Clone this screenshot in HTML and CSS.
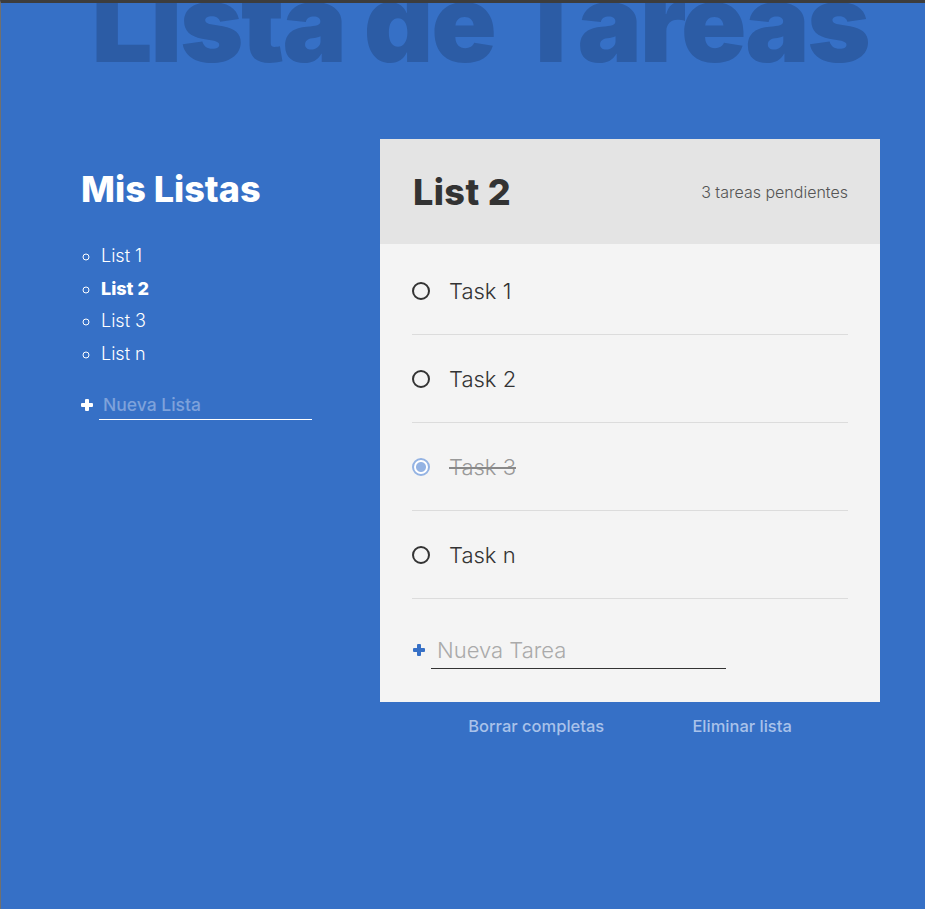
FILE: index.html
```html
<!DOCTYPE html>
<html lang="es">
<head>
<meta charset="utf-8">
<title>Lista de Tareas</title>
<link rel="stylesheet" href="styles.css">
</head>
<body>
<div class="page">
  <h1 class="title">Lista de Tareas</h1>
  <main class="layout">
    <section class="lists">
      <h2 class="lists-title">Mis Listas</h2>
      <ul class="list-names">
        <li>List 1</li>
        <li class="active">List 2</li>
        <li>List 3</li>
        <li>List n</li>
      </ul>
      <form class="new-list">
        <span class="plus plus-white"></span>
        <input class="new-list-input" type="text" placeholder="Nueva Lista">
      </form>
    </section>
    <section class="board">
      <div class="card">
        <header class="card-header">
          <h2 class="card-title">List 2</h2>
          <p class="card-count">3 tareas pendientes</p>
        </header>
        <div class="card-body">
          <ul class="tasks">
            <li class="task"><span class="check"></span><span class="task-label">Task 1</span></li>
            <li class="task"><span class="check"></span><span class="task-label">Task 2</span></li>
            <li class="task done"><span class="check"></span><span class="task-label">Task 3</span></li>
            <li class="task"><span class="check"></span><span class="task-label">Task n</span></li>
          </ul>
          <form class="new-task">
            <span class="plus plus-blue"></span>
            <input class="new-task-input" type="text" placeholder="Nueva Tarea">
          </form>
        </div>
      </div>
      <div class="actions">
        <button class="action" type="button">Borrar completas</button>
        <button class="action" type="button">Eliminar lista</button>
      </div>
    </section>
  </main>
</div>
</body>
</html>
```

FILE: styles.css
```css
* { box-sizing: border-box; }

html, body {
  margin: 0;
  padding: 0;
  height: 100%;
}

body {
  font-family: Inter, "Noto Sans", sans-serif;
  background: #3670c6;
}

.page {
  height: 909px;
  background: #3670c6;
  border-top: 3px solid #3d3d3d;
  border-left: 1px solid #707070;
  overflow: hidden;
}

.title {
  margin: -34px 0 0 0;
  padding-left: 34px;
  font-family: Inter, sans-serif;
  font-weight: 900;
  font-size: 108px;
  line-height: 108px;
  letter-spacing: -2.3px;
  color: #2c5ca5;
  text-align: center;
  white-space: nowrap;
}

.layout {
  display: flex;
  margin-top: 62px;
  padding-left: 80px;
}

.lists {
  width: 299px;
  flex: none;
  color: #fff;
}

.lists-title {
  margin: 28px 0 0;
  font-size: 36px;
  line-height: 44px;
  font-weight: 800;
  letter-spacing: 0;
}

.list-names {
  margin: 29px 0 0;
  padding-left: 20px;
  list-style: circle;
  font-size: 18px;
  font-weight: 300;
  line-height: 32.5px;
}

.list-names .active {
  font-weight: 800;
}

.new-list {
  display: flex;
  align-items: center;
  margin-top: 20px;
}

.plus {
  position: relative;
  width: 12px;
  height: 12px;
  flex: none;
}

.plus::before,
.plus::after {
  content: "";
  position: absolute;
  background: currentColor;
  border-radius: 1px;
}

.plus::before { left: 0; top: 4px; width: 12px; height: 4px; }
.plus::after { left: 4px; top: 0; width: 4px; height: 12px; }

.plus-white { color: #fff; }
.plus-blue { color: #3670c6; }

.new-list-input {
  margin-left: 6px;
  width: 213px;
  height: 30px;
  padding: 0 4px;
  border: 0;
  border-bottom: 1px solid #fff;
  background: transparent;
  font-family: Inter, sans-serif;
  font-size: 17.5px;
  font-weight: 500;
  color: #fff;
  outline: none;
}

.new-list-input::placeholder { color: #7ea2db; }

.board {
  width: 500px;
  flex: none;
}

.card {
  background: #f4f4f4;
}

.card-header {
  height: 105px;
  padding: 0 32px 0 33px;
  background: #e4e4e4;
  display: flex;
  align-items: center;
  justify-content: space-between;
}

.card-title {
  margin: 0;
  font-size: 36px;
  font-weight: 800;
  color: #333;
  letter-spacing: 0.4px;
}

.card-count {
  margin: 0;
  font-size: 16px;
  font-weight: 300;
  color: #555;
}

.card-body {
  padding: 3px 32px 33px;
}

.tasks {
  margin: 0;
  padding: 0;
  list-style: none;
}

.task {
  display: flex;
  align-items: center;
  gap: 19px;
  padding: 31px 0 30px;
  border-bottom: 1px solid #dcdcdc;
  font-size: 22px;
  font-weight: 300;
  line-height: 26px;
  color: #333;
}

.check {
  width: 18px;
  height: 18px;
  flex: none;
  border: 2px solid #333;
  border-radius: 50%;
}

.task.done { color: #999; }
.task.done .task-label { text-decoration: line-through; text-decoration-color: #888; }
.task.done .check {
  border: 2px solid #94b3e3;
  background: radial-gradient(circle, #94b3e3 0 4.5px, #fff 5.5px);
}

.new-task {
  display: flex;
  align-items: center;
  padding-top: 32px;
}

.plus-blue { margin-left: 1px; }

.new-task-input {
  margin-left: 6px;
  width: 295px;
  height: 38px;
  padding: 0 6px;
  border: 0;
  border-bottom: 1px solid #333;
  background: transparent;
  font-family: Inter, sans-serif;
  font-size: 22px;
  font-weight: 300;
  color: #333;
  outline: none;
}

.new-task-input::placeholder { color: #aaa; }

.actions {
  display: flex;
  justify-content: space-evenly;
  padding-top: 14px;
}

.action {
  border: 0;
  background: transparent;
  padding: 0;
  font-family: Inter, sans-serif;
  font-size: 16.5px;
  font-weight: 500;
  color: #a9c2ea;
  cursor: pointer;
}
```
